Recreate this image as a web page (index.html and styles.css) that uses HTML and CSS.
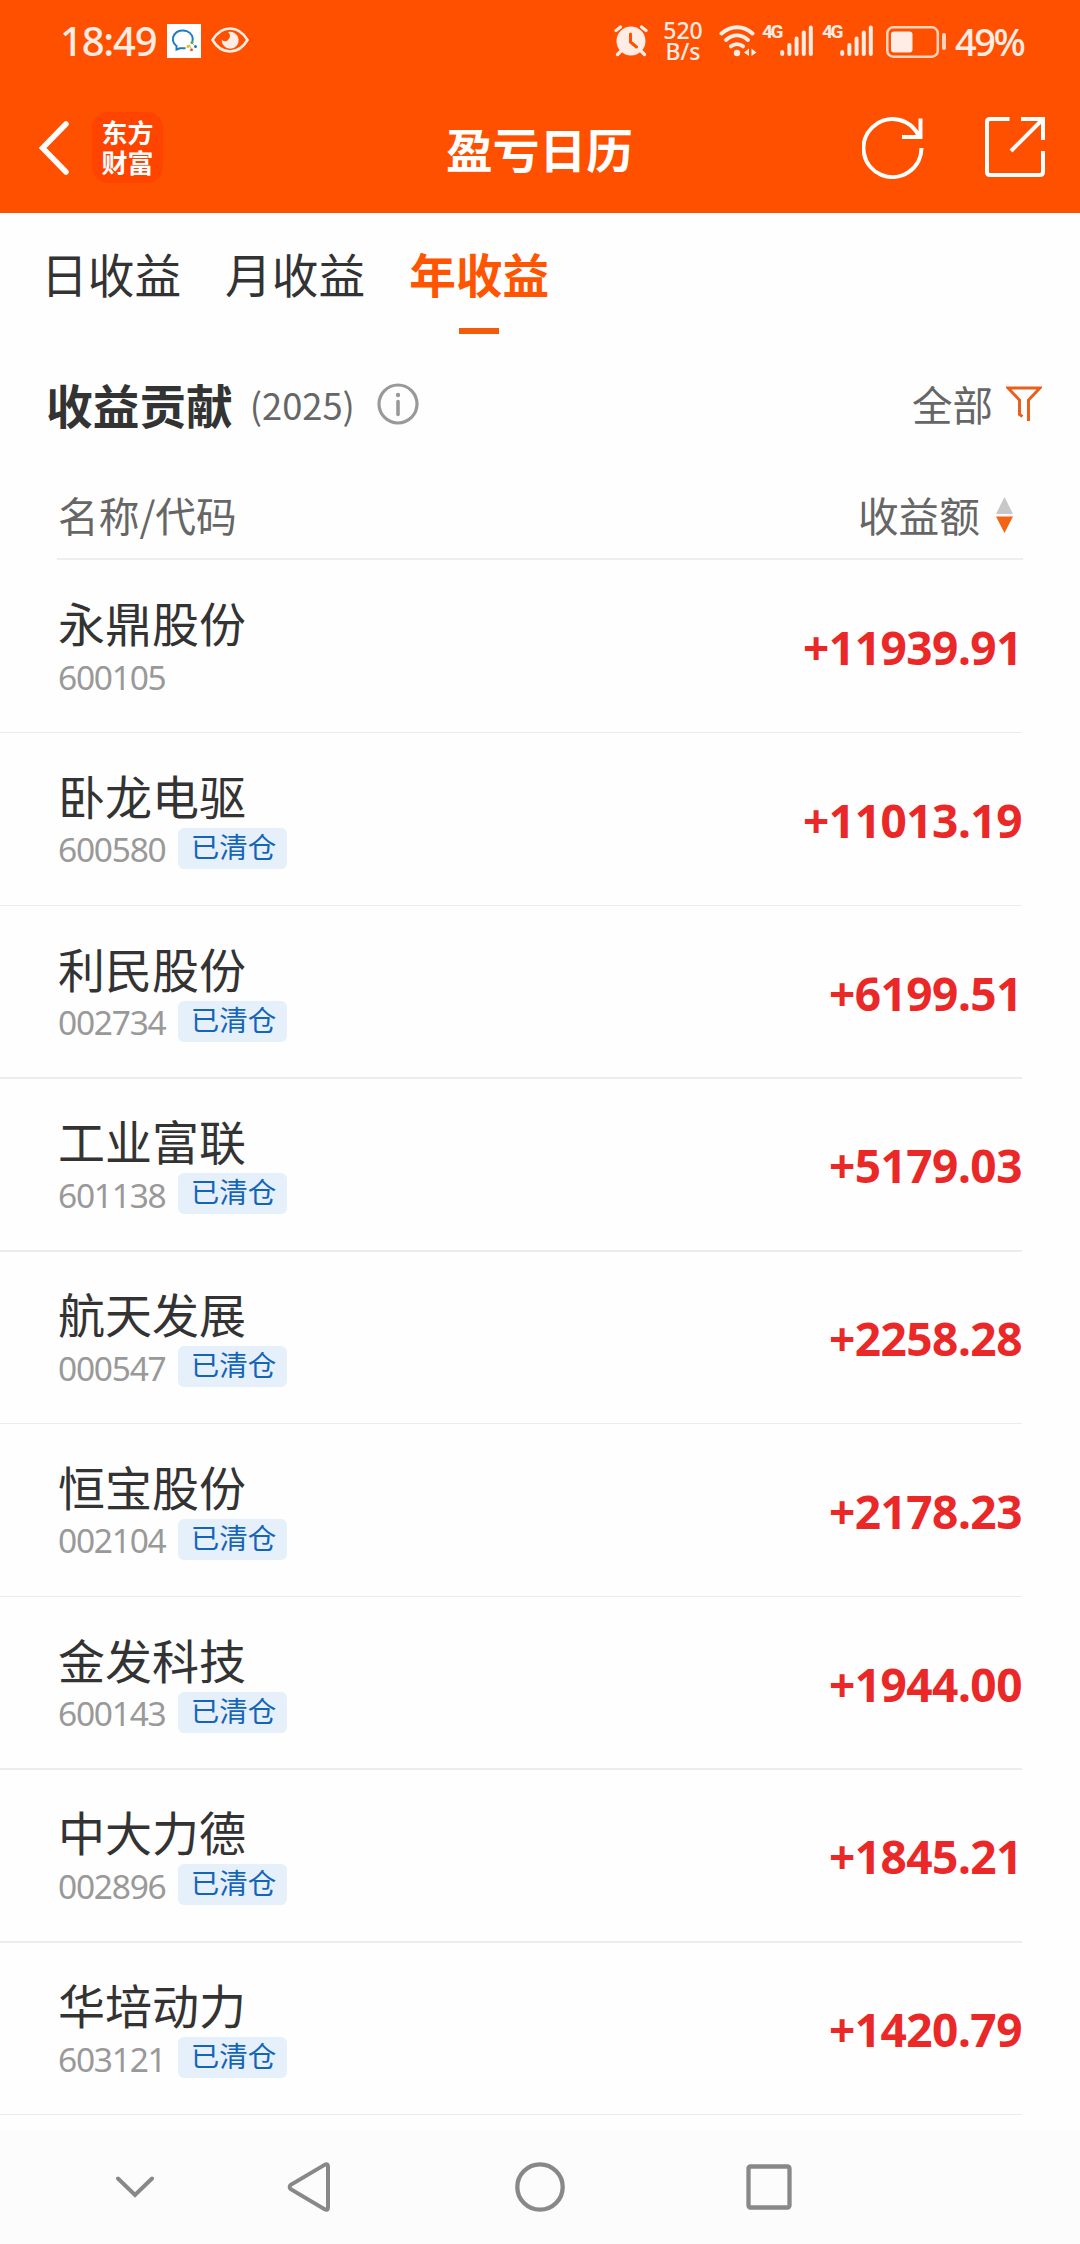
FILE: index.html
```html
<!DOCTYPE html>
<html lang="zh-CN">
<head>
<meta charset="utf-8">
<title>盈亏日历</title>
<link rel="stylesheet" href="styles.css">
</head>
<body>
<div class="screen">
  <header class="top">
    <div class="status">
      <div class="status-side">
        <span class="clock">18:49</span>
        <svg class="chat" width="34" height="34" viewBox="0 0 34 34"><rect width="34" height="34" fill="#fff"/><path d="M25.500 17.500A10 8.800 0 1 0 9.500 22V25.500L13 24.200H18.500" fill="none" stroke="#1d7cc4" stroke-width="2"/><circle cx="25" cy="18.500" r="1.500" fill="#4caf3a"/><circle cx="21" cy="22.500" r="1.500" fill="#e8b923"/><circle cx="28.500" cy="22.500" r="1.500" fill="#2278c8"/><circle cx="24.500" cy="25.800" r="1.500" fill="#d8622a"/><path d="M22 20.500l2 3.500M26 20l2 2" stroke="#aac34a" fill="none"/></svg>
        <svg class="eye" width="38" height="26" viewBox="0 0 38 26"><path d="M1.500 13C6 5.500 12 1.500 19 1.500S32 5.500 36.500 13C32 20.500 26 24.500 19 24.500S6 20.500 1.500 13Z" fill="none" stroke="#ffece4" stroke-width="2.600"/><path d="M17 5A8.500 8.500 0 1 1 10.700 12.500A4 4 0 0 0 17 13A5 5 0 0 0 17 5Z" fill="#ffece4"/></svg>
      </div>
      <div class="status-side">
        <svg class="alarm" width="34" height="32" viewBox="0 0 34 32"><g stroke="#ffece4" stroke-width="3.200" stroke-linecap="round" fill="none"><path d="M2 5.500L6.500 2M32 5.500L27.500 2M7 26l-3.500 3.500M27 26l3.500 3.500"/></g><circle cx="17" cy="16" r="14.500" fill="#ffece4"/><path d="M16.500 9v8l6 5" fill="none" stroke="#ff5000" stroke-width="3" stroke-linecap="round"/></svg>
        <span class="speed"><span>520</span><span>B/s</span></span>
        <svg class="wifi" width="38" height="32" viewBox="0 0 38 32"><g fill="none" stroke="#ffece4" stroke-width="4" stroke-linecap="round"><path d="M2.500 8.500C12 0 24.500 0 33.500 8.500"/><path d="M7 15C14 9 22 9 29 15"/><path d="M12 21.300C15.500 18.500 20.500 18.500 24 21.300"/></g><circle cx="18" cy="28" r="3.200" fill="#ffece4"/><path d="M30 23.500v7.500l-5-3.500zM32.500 23.500v7.500l5-3.500z" fill="#ffece4"/></svg>
        <span class="net">4G</span>
        <svg class="bars" width="34" height="32" viewBox="0 0 34 32"><path d="M2.200 27v2M9.400 20v9M16.600 13.500V29M23.800 7.500V29M30.800 2.500V29" stroke="#ffece4" stroke-width="4" stroke-linecap="round"/></svg>
        <span class="net net-second">4G</span>
        <svg class="bars" width="34" height="32" viewBox="0 0 34 32"><path d="M2.200 27v2M9.400 20v9M16.600 13.500V29M23.800 7.500V29M30.800 2.500V29" stroke="#ffece4" stroke-width="4" stroke-linecap="round"/></svg>
        <svg class="battery" width="61" height="32" viewBox="0 0 61 32"><rect x="1.300" y="1.300" width="50.500" height="29.400" rx="6" fill="none" stroke="#ffd3bd" stroke-width="2.500"/><rect x="5" y="5.500" width="21.500" height="21" rx="3" fill="#ffece4"/><rect x="56" y="7" width="4" height="17" rx="2" fill="#ffd3bd"/></svg>
        <span class="percent">49%</span>
      </div>
    </div>
    <div class="bar">
      <div class="bar-left">
        <svg width="30" height="54" viewBox="0 0 30 54"><path d="M27 3L3.500 27L27 51" fill="none" stroke="#fff" stroke-width="5.500" stroke-linecap="round"/></svg>
        <div class="logo"><span>东方</span><span>财富</span></div>
      </div>
      <h1 class="title">盈亏日历</h1>
      <div class="bar-right">
        <svg width="62" height="62" viewBox="0 0 62 62"><path d="M59.500 31A29 29 0 1 1 57.500 20.500M58.500 1.500V20H40" fill="none" stroke="#fff" stroke-width="4"/></svg>
        <svg width="60" height="60" viewBox="0 0 60 60"><path d="M24.500 2H5Q2 2 2 5V55Q2 58 5 58H55Q58 58 58 55V34M36 2H58V23M58 2L26 34" fill="none" stroke="#fff" stroke-width="4"/></svg>
      </div>
    </div>
  </header>
  <nav class="tabs">
    <span class="tab">日收益</span>
    <span class="tab">月收益</span>
    <span class="tab tab-active">年收益</span>
  </nav>
  <section class="summary">
    <div class="summary-left">
      <h2 class="heading">收益贡献</h2>
      <span class="year">(2025)</span>
      <svg width="42" height="42" viewBox="0 0 42 42"><circle cx="21" cy="21" r="19" fill="none" stroke="#999" stroke-width="3.200"/><circle cx="21" cy="12" r="2.200" fill="#999"/><path d="M21 18.500V31.500" stroke="#999" stroke-width="3.600" stroke-linecap="round"/></svg>
    </div>
    <div class="filter">
      <span>全部</span>
      <svg width="36" height="36" viewBox="0 0 36 36"><path d="M16.500 30.500L13.500 28.500V14L2 2H34L22.500 14V35" fill="none" stroke="#e8601c" stroke-width="3"/></svg>
    </div>
  </section>
  <div class="columns">
    <span>名称/代码</span>
    <span class="sort">收益额
      <svg width="17" height="36" viewBox="0 0 17 36"><path d="M8.500 0L17 17H0Z" fill="#c8c8c8"/><path d="M0 19.500H17L8.500 36Z" fill="#f56314"/></svg>
    </span>
  </div>
  <main class="list">
    <div class="row"><div class="stock"><div class="name">永鼎股份</div><div class="meta"><span class="code">600105</span></div></div><div class="amount">+11939.91</div></div>
    <div class="row"><div class="stock"><div class="name">卧龙电驱</div><div class="meta"><span class="code">600580</span><span class="badge">已清仓</span></div></div><div class="amount">+11013.19</div></div>
    <div class="row"><div class="stock"><div class="name">利民股份</div><div class="meta"><span class="code">002734</span><span class="badge">已清仓</span></div></div><div class="amount">+6199.51</div></div>
    <div class="row"><div class="stock"><div class="name">工业富联</div><div class="meta"><span class="code">601138</span><span class="badge">已清仓</span></div></div><div class="amount">+5179.03</div></div>
    <div class="row"><div class="stock"><div class="name">航天发展</div><div class="meta"><span class="code">000547</span><span class="badge">已清仓</span></div></div><div class="amount">+2258.28</div></div>
    <div class="row"><div class="stock"><div class="name">恒宝股份</div><div class="meta"><span class="code">002104</span><span class="badge">已清仓</span></div></div><div class="amount">+2178.23</div></div>
    <div class="row"><div class="stock"><div class="name">金发科技</div><div class="meta"><span class="code">600143</span><span class="badge">已清仓</span></div></div><div class="amount">+1944.00</div></div>
    <div class="row"><div class="stock"><div class="name">中大力德</div><div class="meta"><span class="code">002896</span><span class="badge">已清仓</span></div></div><div class="amount">+1845.21</div></div>
    <div class="row"><div class="stock"><div class="name">华培动力</div><div class="meta"><span class="code">603121</span><span class="badge">已清仓</span></div></div><div class="amount">+1420.79</div></div>
  </main>
  <footer class="keys">
    <svg class="key-down" width="38" height="22" viewBox="0 0 38 22"><path d="M2 2.500L19 19L36 2.500" fill="none" stroke="#888" stroke-width="4" stroke-linecap="round"/></svg>
    <svg class="key-back" width="44" height="50" viewBox="0 0 44 50"><path d="M38 2.600L3.800 22.800Q1.500 25 3.800 27.200L38 47.400Q41 48.500 41 45.500V4.500Q41 1.500 38 2.600Z" fill="none" stroke="#888" stroke-width="4"/></svg>
    <svg class="key-home" width="50" height="50" viewBox="0 0 50 50"><circle cx="25" cy="25" r="22.700" fill="none" stroke="#888" stroke-width="4.300"/></svg>
    <svg class="key-recent" width="46" height="46" viewBox="0 0 46 46"><rect x="2.500" y="2.500" width="41" height="41" rx="2" fill="none" stroke="#888" stroke-width="4.300"/></svg>
  </footer>
</div>
</body>
</html>
```
FILE: styles.css
```css
* { box-sizing: border-box; }
body { margin: 0; background: #fefefe; color: #333; font-family: "Noto Sans CJK SC", sans-serif; }
svg { display: block; flex: none; }
h1, h2 { margin: 0; }

.screen { display: flex; flex-direction: column; width: 1080px; height: 2244px; overflow: hidden; }

.top { flex: none; height: 213px; background: #ff5000; color: #fff; }
.status { display: flex; justify-content: space-between; height: 82px; padding: 0 54px 0 60px; color: #ffece4; font-family: "Noto Sans", "Noto Sans CJK SC", sans-serif; }
.status-side { display: flex; align-items: center; }
.clock { width: 107px; font-size: 40px; font-weight: 500; line-height: 86px; letter-spacing: -1.200px; white-space: nowrap; }
.eye { margin-left: 10px; margin-top: -2px; }
.alarm { margin-right: 15px; }
.speed { display: flex; flex-direction: column; width: 40px; margin: 0 16px 0 0; font-size: 23px; font-weight: 500; line-height: 21.500px; text-align: center; }
.net { width: 19px; margin: -18px 0 0 5px; font-family: Roboto, sans-serif; font-size: 19px; font-weight: 700; line-height: 20px; letter-spacing: -2.500px; white-space: nowrap; }
.net-second { margin-left: 8px; }
.bars { margin-left: -1px; }
.battery { margin: 2px 8px 0 12px; }
.percent { width: 71px; font-size: 38px; font-weight: 500; line-height: 86px; letter-spacing: -2.500px; white-space: nowrap; }

.bar { display: grid; grid-template-columns: 1fr auto 1fr; align-items: center; height: 131px; padding: 0 35px 0 39px; }
.bar-left { display: flex; align-items: center; gap: 23px; }
.logo { display: flex; flex-direction: column; justify-content: center; width: 71px; height: 71px; border-radius: 16px; background: #ff4400; font-size: 26px; font-weight: 700; line-height: 30px; text-align: center; padding-bottom: 2px; }
.title { font-size: 46.700px; font-weight: 700; line-height: 60px; margin-left: -5px; }
.bar-right { display: flex; justify-content: flex-end; gap: 61px; }

.tabs { display: flex; flex: none; gap: 44px; height: 121px; padding-left: 41px; font-size: 46.700px; line-height: 120px; }
.tab-active { display: flex; flex-direction: column; align-items: center; color: #ff5500; font-weight: 700; line-height: 120px; }
.tab-active::after { content: ""; width: 40px; height: 6px; margin-top: -5px; background: #f55a0a; }

.summary { display: flex; flex: none; justify-content: space-between; align-items: center; height: 139px; padding: 0 38px 0 46px; }
.summary-left, .filter { display: flex; align-items: center; }
.heading { font-size: 46.700px; line-height: 60px; }
.year { margin: 0 22px 0 17px; color: #666; font-size: 36.300px; line-height: 60px; }
.filter { gap: 13px; color: #666; font-size: 40.500px; line-height: 60px; }

.columns { display: flex; flex: none; justify-content: space-between; align-items: center; height: 87px; margin: 0 57px; padding: 0 10px 2px 1px; border-bottom: 2px solid #eee; color: #666; font-size: 40.700px; line-height: 60px; }
.sort { display: flex; align-items: center; gap: 16px; }

.list { flex: none; height: 1570px; }
.row { position: relative; display: flex; justify-content: space-between; height: 172.750px; margin-right: 58px; padding-left: 58px; }
.row::after { content: ""; position: absolute; left: 0; right: 0; bottom: -0.500px; height: 1.500px; background: #ececec; }
.name { padding-top: 34px; font-size: 47px; line-height: 56px; }
.meta { display: flex; align-items: center; gap: 12px; height: 41px; margin-top: 5px; }
.code { width: 108px; color: #999; font-family: "Noto Sans", sans-serif; font-size: 33.500px; line-height: 41px; letter-spacing: -1.250px; padding-top: 3px; }
.badge { width: 109px; height: 41px; padding-left: 2px; border-radius: 6px; background: #e5f0fa; color: #1464b8; font-size: 28.500px; line-height: 36px; text-align: center; }
.amount { color: #ea2828; font-family: "Noto Sans", sans-serif; font-size: 46px; font-weight: 700; line-height: 174px; letter-spacing: -0.500px; }

.keys { display: flex; flex: none; align-items: center; height: 114px; background: #fcfcfc; padding-left: 116px; }
.key-back { margin-left: 133px; }
.key-home { margin-left: 184px; }
.key-recent { margin-left: 181px; }
```
